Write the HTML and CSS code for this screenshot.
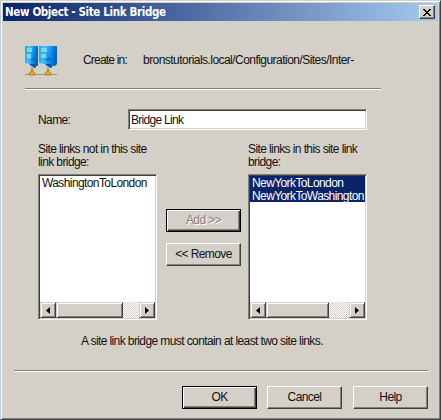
FILE: index.html
```html
<!DOCTYPE html>
<html lang="en">
<head>
<meta charset="utf-8">
<title>New Object - Site Link Bridge</title>
<link rel="stylesheet" href="styles.css">
</head>
<body>
<main class="window">
  <header class="titlebar">
    <h1>New Object - Site Link Bridge</h1>
    <button class="close" aria-label="Close"><svg width="8" height="7" viewBox="0 0 8 7" shape-rendering="crispEdges"><path d="M0 0h2v1h1v1h2V1h1V0h2v1H7v1H6v1H5v1h1v1h1v1h1v1H6V6H5V5H3v1H2v1H0V6h1V5h1V4h1V3H2V2H1V1H0z"/></svg></button>
  </header>
  <section class="origin">
    <svg class="sites" width="32" height="31" viewBox="0 0 32 31">
      <defs><linearGradient id="blue" x2="1" y2=".2"><stop stop-color="#22a5e8"/><stop offset=".35" stop-color="#45c3f8"/><stop offset=".7" stop-color="#1292ef"/><stop offset="1" stop-color="#0862bd"/></linearGradient></defs>
      <path d="M0 28.5h32" stroke="#929292"/>
      <path d="M7 18v8M23 18v8" stroke="#aaa79f" stroke-width="2"/>
      <path d="M0 0h13v20h-2v2H9l-2-3-3-1-4-1z" fill="url(#blue)"/><path d="M2 2h5v4H2zM2 8h4v5H2z" fill="#8be2fd" opacity=".7"/><path d="M9 1v17M1 7h12M1 13h12" stroke="#0b70c9" stroke-width=".6" opacity=".5"/><path d="M5 15l4-5 2 5z" fill="#086bb9" opacity=".6"/><path d="M5 18h5v3H8l-1-2-2 1z" fill="#0751a5"/>
      <path d="M14 0h18v18l-2 2h-3v2h-2l-3-3-3-1-5-1z" fill="url(#blue)"/><path d="M16 2h6v4h-6zM16 8h5v4h-5z" fill="#8be2fd" opacity=".7"/><path d="M23 1v17M15 7h16M15 13h16M28 1v17" stroke="#086bc3" stroke-width=".6" opacity=".5"/><path d="M20 15l4-5 3 5z" fill="#086bb9" opacity=".6"/><path d="M21 18h5v3h-2l-1-2-2 1z" fill="#064b9d"/>
      <path d="M6 24h2v2l2 1v2H4v-2l2-1zM22 24h2v2l2 1v2h-6v-2l2-1z" fill="#e5a817" stroke="#b87c08" stroke-width=".8"/>
    </svg>
    <span class="create">Create in:</span><span class="path">bronstutorials.local/Configuration/Sites/Inter-</span>
  </section>
  <form class="form">
    <div class="name-row"><label for="name">Name:</label><input id="name" value="Bridge Link"></div>
    <div class="columns">
      <section class="column">
        <h2>Site links not in this site<br>link bridge:</h2>
        <div class="list">
          <ul><li>WashingtonToLondon</li></ul>
          <div class="scroll"><i class="arrow"><svg width="4" height="7"><path d="M4 0v7L0 3.5z"/></svg></i><i class="thumb"></i><i class="track"></i><i class="arrow"><svg width="4" height="7"><path d="M0 0v7l4-3.5z"/></svg></i></div>
        </div>
      </section>
      <div class="transfer"><button type="button" class="button default" disabled>Add &gt;&gt;</button><button type="button" class="button">&lt;&lt; Remove</button></div>
      <section class="column">
        <h2>Site links in this site link<br>bridge:</h2>
        <div class="list">
          <ul><li class="selected">NewYorkToLondon</li><li class="selected">NewYorkToWashington</li></ul>
          <div class="scroll second"><i class="arrow"><svg width="4" height="7"><path d="M4 0v7L0 3.5z"/></svg></i><i class="thumb"></i><i class="track"></i><i class="arrow"><svg width="4" height="7"><path d="M0 0v7l4-3.5z"/></svg></i></div>
        </div>
      </section>
    </div>
    <p class="note">A site link bridge must contain at least two site links.</p>
  </form>
  <footer class="actions"><button class="button default">OK</button><button class="button">Cancel</button><button class="button help">Help</button></footer>
</main>
</body>
</html>
```
FILE: styles.css
```css
* { box-sizing: border-box; }
body { margin: 0; width: 441px; height: 420px; overflow: hidden; background: #d4d0c8; color: #111; font: 12px/13px "Liberation Sans", Arial, sans-serif; letter-spacing: -.6px; }
h1, h2, p, ul { margin: 0; padding: 0; font: inherit; }
button, input { font: inherit; color: inherit; letter-spacing: inherit; margin: 0; border-radius: 0; }
.window { width: 441px; height: 420px; border: 1px solid; border-color: #d4d0c8 #404040 #404040 #b5cce4; padding: 2px; box-shadow: inset 1px 1px #fff, inset -1px -1px #808080; }
.titlebar { height: 18px; display: flex; align-items: center; justify-content: space-between; padding: 0 3px 0 2px; background: linear-gradient(90deg, #0a246a, #a6caf0); color: #fff; }
.titlebar h1 { font: bold 11.5px/18px "DejaVu Sans Condensed", "DejaVu Sans", sans-serif; letter-spacing: -.36px; white-space: nowrap; }
.close { display: flex; align-items: center; justify-content: center; width: 16px; height: 14px; padding: 0; background: #d4d0c8; border: 1px solid; border-color: #fff #404040 #404040 #fff; box-shadow: inset -1px -1px #808080; }
.origin { display: flex; align-items: flex-start; width: 356px; height: 69px; margin-left: 22px; padding-top: 25px; border-bottom: 1px solid #fff; box-shadow: inset 0 -1px #808080; white-space: nowrap; }
.sites { flex: none; }
.create { width: 60px; margin: 8px 0 0 26px; letter-spacing: -.8px; }
.path { margin-top: 8px; letter-spacing: -.54px; }
.form { height: 280px; padding: 19px 0 0 35px; }
.name-row { display: flex; height: 21px; }
.name-row label { width: 90px; padding-top: 5px; }
.name-row input, .list { background: #fff; border: 1px solid; border-color: #808080 #fff #fff #808080; box-shadow: inset 1px 1px #404040, inset -1px -1px #d4d0c8; }
.name-row input { width: 239px; height: 21px; padding: 0 2px; outline: 0; letter-spacing: -.7px; }
.columns { display: flex; width: 329px; height: 190px; }
.column { width: 119px; padding-top: 13px; }
h2 { height: 31px; white-space: nowrap; }
.list { width: 119px; height: 146px; padding: 1px; display: flex; flex-direction: column; }
ul { flex: 1; overflow: hidden; list-style: none; }
li { height: 13px; padding-left: 2px; line-height: 15px; white-space: nowrap; }
.selected { color: #fff; background: #0a246a; }
.scroll { display: flex; height: 16px; }
.scroll i { height: 16px; }
.arrow, .thumb { background: #d4d0c8; border: 1px solid; border-color: #d4d0c8 #404040 #404040 #d4d0c8; box-shadow: inset 1px 1px #fff, inset -1px -1px #808080; }
.arrow { width: 16px; display: flex; align-items: center; justify-content: center; }
.thumb { width: 67px; }
.second .thumb { width: 63px; }
.track { flex: 1; background: repeating-conic-gradient(#d4d0c8 0 25%, #fff 0 50%) 0 0 / 2px 2px; }
.transfer { width: 91px; padding: 79px 7px 0 9px; display: flex; flex-direction: column; gap: 11px; }
.button { display: flex; align-items: center; justify-content: center; width: 75px; height: 23px; padding: 0 0 1px; background: #d4d0c8; border: 1px solid; border-color: #fff #404040 #404040 #fff; box-shadow: inset -1px -1px #808080; white-space: nowrap; }
.default { border-color: #000; box-shadow: inset 1px 1px #fff, inset -1px -1px #404040, inset -2px -2px #808080; }
.button:disabled { color: #808080; text-shadow: 1px 1px #fff; }
.note { padding: 15px 0 0 43px; white-space: nowrap; }
.actions { display: flex; gap: 10px; width: 414px; height: 39px; margin-left: 11px; padding: 15px 0 0 168px; border-top: 1px solid #808080; box-shadow: inset 0 1px #fff; }
.help { margin-left: 1px; }
```
